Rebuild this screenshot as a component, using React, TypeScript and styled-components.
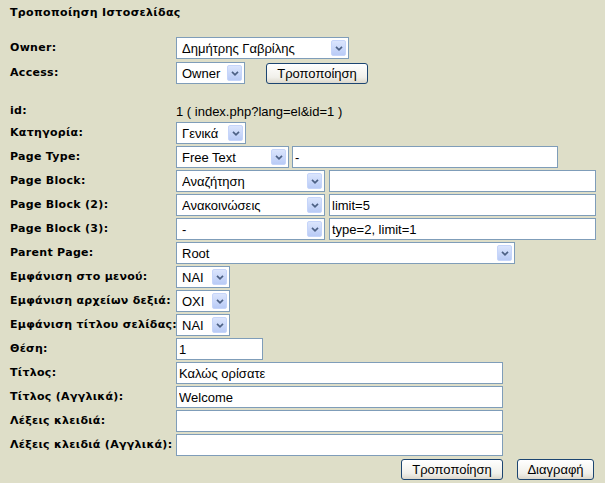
import styled, { createGlobalStyle } from "styled-components";

const GlobalStyle = createGlobalStyle`
  html, body {
    margin: 0;
    padding: 0;
    background-color: #dedec8;
  }
  body {
    font-family: "Liberation Sans", Arial, sans-serif;
    font-size: 13px;
    color: #000;
  }
`;

const Page = styled.div`
  padding: 5px 0 0 10px;
  min-height: 100vh;
  box-sizing: border-box;
`;

const Title = styled.h3`
  margin: 0 0 16px;
  font-family: "DejaVu Sans", Tahoma, sans-serif;
  font-size: 11px;
  font-weight: bold;
  letter-spacing: 0.35px;
  line-height: 16px;
`;

const Form = styled.div`
  display: flex;
  flex-direction: column;
  gap: 2px;
`;

const Row = styled.div<{ $top?: number; $h?: number }>`
  display: grid;
  grid-template-columns: 166px auto;
  align-items: center;
  height: ${(p) => p.$h ?? 22}px;
  margin-top: ${(p) => p.$top ?? 0}px;
`;

const Label = styled.div`
  padding-bottom: 2px;
  font-family: "DejaVu Sans", Tahoma, sans-serif;
  font-size: 11px;
  font-weight: bold;
  letter-spacing: 0.3px;
  white-space: nowrap;
`;

const Field = styled.div<{ $gap?: number }>`
  display: flex;
  align-items: center;
  gap: ${(p) => p.$gap ?? 4}px;
`;

const Value = styled.span`
  font-size: 13px;
  white-space: nowrap;
`;

const SelectBox = styled.div<{ $w: number }>`
  display: inline-flex;
  align-items: center;
  width: ${(p) => p.$w}px;
  height: 22px;
  padding: 0 2px 0 5px;
  box-sizing: border-box;
  border: 1px solid #7f9db9;
  background: #fff;
`;

const SelectText = styled.span`
  flex: 1;
  overflow: hidden;
  white-space: nowrap;
  font-size: 13px;
`;

const ArrowBtn = styled.span`
  display: flex;
  align-items: center;
  justify-content: center;
  width: 15px;
  height: 16px;
  box-sizing: border-box;
  border: 1px solid #c6d5fa;
  border-radius: 2px;
  background: linear-gradient(#dbe5fd, #b9cbf6);
`;

const TextInput = styled.input<{ $w: number }>`
  width: ${(p) => p.$w}px;
  height: 22px;
  margin: 0;
  padding: 0 2px;
  box-sizing: border-box;
  border: 1px solid #7f9db9;
  background: #fff;
  font-family: "Liberation Sans", Arial, sans-serif;
  font-size: 13px;
  color: #000;
  outline: none;
`;

const Button = styled.button<{ $w: number; $ml?: number }>`
  width: ${(p) => p.$w}px;
  height: 21px;
  margin: 0 0 0 ${(p) => p.$ml ?? 0}px;
  padding: 0;
  box-sizing: border-box;
  border: 1px solid #1c4571;
  border-radius: 3px;
  background: linear-gradient(#ffffff, #f1f0ea 70%, #dcd8cc);
  font-family: "Liberation Sans", Arial, sans-serif;
  font-size: 13px;
  color: #000;
`;

const ButtonBar = styled.div`
  display: flex;
  justify-content: flex-end;
  gap: 14px;
  margin-top: 1px;
  padding-right: 11px;
`;

function Dropdown({ w, value }: { w: number; value: string }) {
  return (
    <SelectBox $w={w}>
      <SelectText>{value}</SelectText>
      <ArrowBtn>
        <svg width="8" height="5" viewBox="0 0 8 5">
          <polyline
            points="1,0.8 4,3.8 7,0.8"
            fill="none"
            stroke="#4d6185"
            strokeWidth="1.7"
          />
        </svg>
      </ArrowBtn>
    </SelectBox>
  );
}

export default function App() {
  return (
    <>
      <GlobalStyle />
      <Page>
        <Title>Τροποποίηση Ιστοσελίδας</Title>
        <Form>
          <Row>
            <Label>Owner:</Label>
            <Field>
              <Dropdown w={173} value="Δημήτρης Γαβρίλης" />
            </Field>
          </Row>
          <Row $top={1}>
            <Label>Access:</Label>
            <Field>
              <Dropdown w={69} value="Owner" />
              <Button $w={102} $ml={17}>
                Τροποποίηση
              </Button>
            </Field>
          </Row>
          <Row $top={16} $h={18}>
            <Label>id:</Label>
            <Value>1 ( index.php?lang=el&amp;id=1 )</Value>
          </Row>
          <Row>
            <Label>Κατηγορία:</Label>
            <Field>
              <Dropdown w={70} value="Γενικά" />
            </Field>
          </Row>
          <Row>
            <Label>Page Type:</Label>
            <Field $gap={3}>
              <Dropdown w={113} value="Free Text" />
              <TextInput $w={266} defaultValue="-" />
            </Field>
          </Row>
          <Row>
            <Label>Page Block:</Label>
            <Field>
              <Dropdown w={149} value="Αναζήτηση" />
              <TextInput $w={267} defaultValue="" />
            </Field>
          </Row>
          <Row>
            <Label>Page Block (2):</Label>
            <Field>
              <Dropdown w={149} value="Ανακοινώσεις" />
              <TextInput $w={267} defaultValue="limit=5" />
            </Field>
          </Row>
          <Row>
            <Label>Page Block (3):</Label>
            <Field>
              <Dropdown w={149} value="-" />
              <TextInput $w={267} defaultValue="type=2, limit=1" />
            </Field>
          </Row>
          <Row>
            <Label>Parent Page:</Label>
            <Field>
              <Dropdown w={339} value="Root" />
            </Field>
          </Row>
          <Row>
            <Label>Εμφάνιση στο μενού:</Label>
            <Field>
              <Dropdown w={54} value="ΝΑΙ" />
            </Field>
          </Row>
          <Row>
            <Label>Εμφάνιση αρχείων δεξιά:</Label>
            <Field>
              <Dropdown w={54} value="ΟΧΙ" />
            </Field>
          </Row>
          <Row>
            <Label>Εμφάνιση τίτλου σελίδας:</Label>
            <Field>
              <Dropdown w={54} value="ΝΑΙ" />
            </Field>
          </Row>
          <Row>
            <Label>Θέση:</Label>
            <Field>
              <TextInput $w={87} defaultValue="1" />
            </Field>
          </Row>
          <Row>
            <Label>Τίτλος:</Label>
            <Field>
              <TextInput $w={327} defaultValue="Καλώς ορίσατε" />
            </Field>
          </Row>
          <Row>
            <Label>Τίτλος (Αγγλικά):</Label>
            <Field>
              <TextInput $w={327} defaultValue="Welcome" />
            </Field>
          </Row>
          <Row>
            <Label>Λέξεις κλειδιά:</Label>
            <Field>
              <TextInput $w={327} defaultValue="" />
            </Field>
          </Row>
          <Row>
            <Label>Λέξεις κλειδιά (Αγγλικά):</Label>
            <Field>
              <TextInput $w={327} defaultValue="" />
            </Field>
          </Row>
          <ButtonBar>
            <Button $w={102}>Τροποποίηση</Button>
            <Button $w={77}>Διαγραφή</Button>
          </ButtonBar>
        </Form>
      </Page>
    </>
  );
}
